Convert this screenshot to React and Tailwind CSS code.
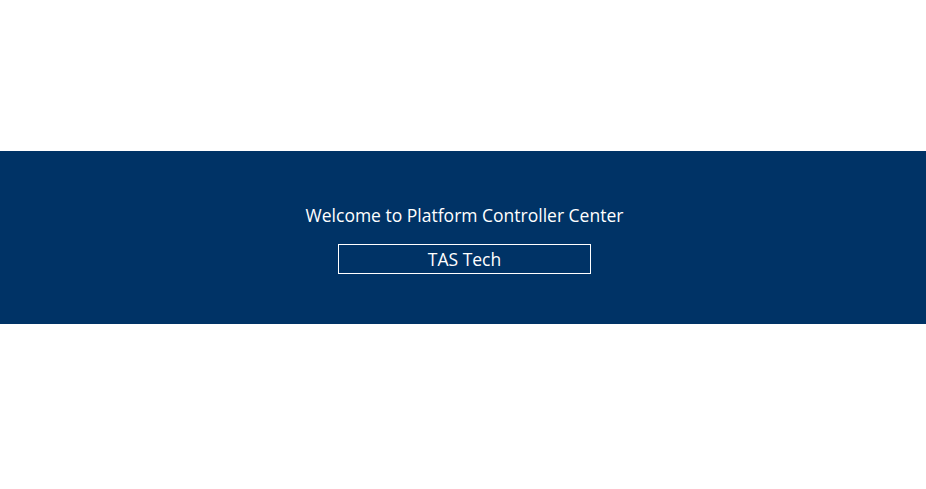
export default function App() {
  return (
    <div className="w-full h-[489px] bg-white pt-[151px] overflow-hidden" style={{ fontFamily: '"Open Sans", "Noto Sans", sans-serif' }}>
      <div className="h-[173px] bg-[#003366] flex flex-col items-center">
        <div className="pt-[53px] flex flex-col items-center pl-[3px]">
          <div className="text-white text-[17.5px] leading-[22px] font-medium">Welcome to Platform Controller Center</div>
          <div className="mt-[18px] w-[253px] h-[30px] border border-white flex items-center justify-center text-white text-[17.5px] font-medium">TAS Tech</div>
        </div>
      </div>
    </div>
  );
}
